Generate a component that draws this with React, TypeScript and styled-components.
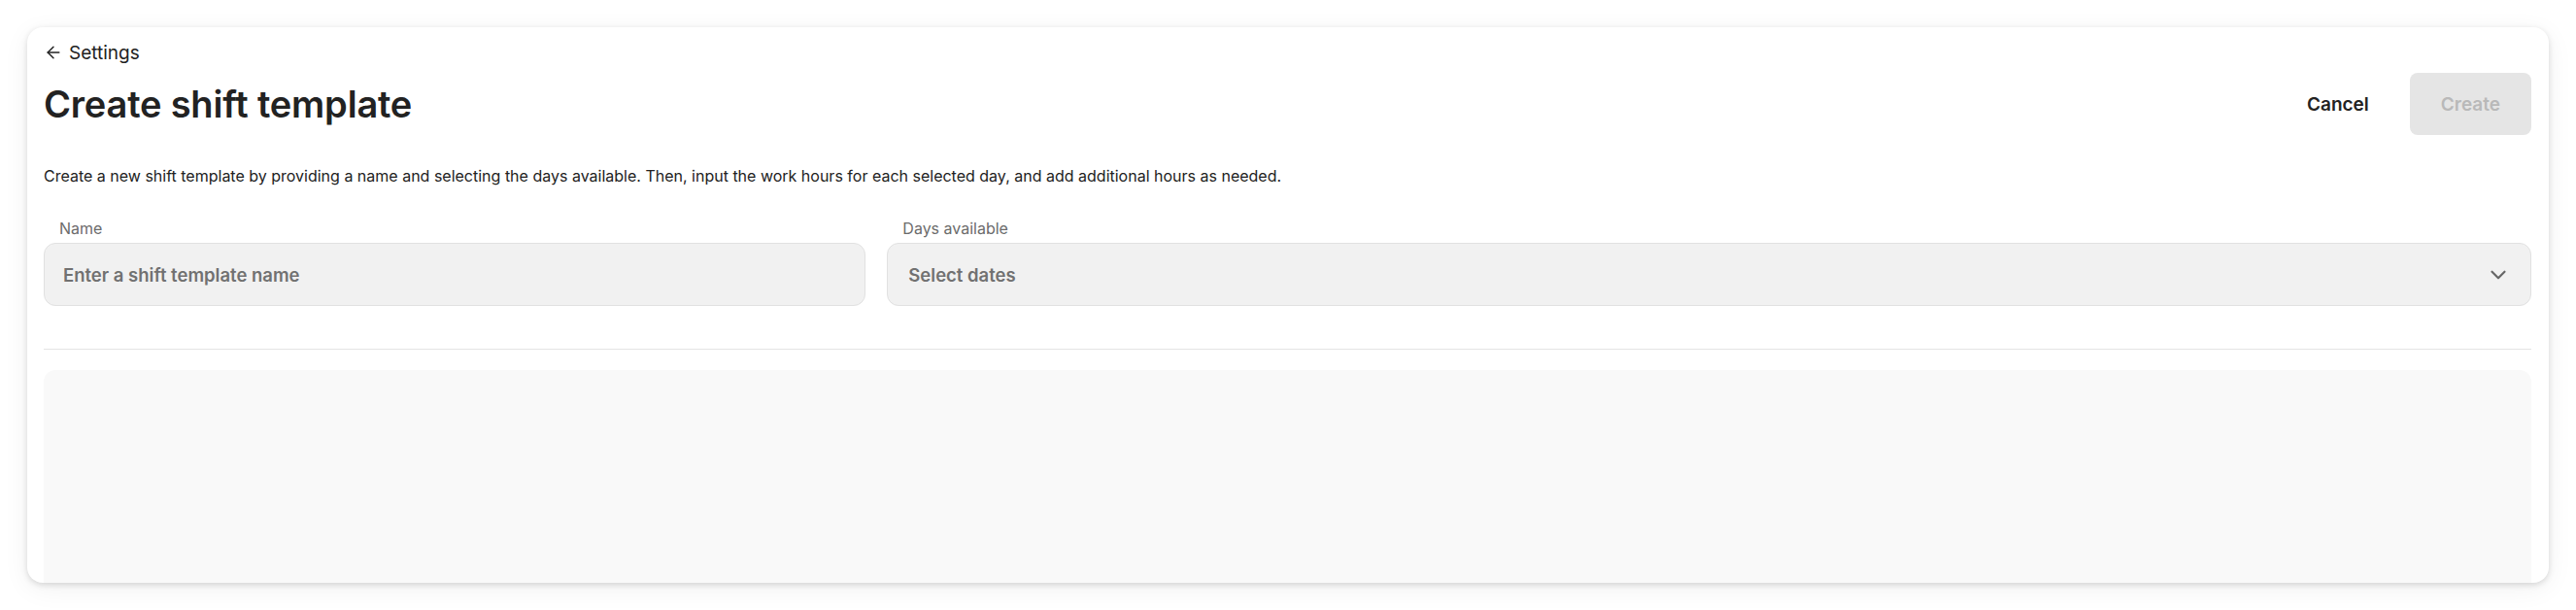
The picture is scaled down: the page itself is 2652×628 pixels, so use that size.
import { ArrowLeft, ChevronDown } from "lucide-react";
import styled, { createGlobalStyle } from "styled-components";

const GlobalStyle = createGlobalStyle`
  * {
    box-sizing: border-box;
  }
  body {
    margin: 0;
    background: #ffffff;
    font-family: Inter, "Noto Sans", sans-serif;
    color: #222222;
  }
`;

const Page = styled.div`
  height: 628px;
  padding: 28px;
`;

const Card = styled.div`
  height: 100%;
  display: flex;
  flex-direction: column;
  padding: 16px 18px 0 17px;
  background: #ffffff;
  border-radius: 16px;
  overflow: hidden;
  box-shadow: 0 2px 6px rgba(0, 0, 0, 0.14), 0 6px 28px rgba(0, 0, 0, 0.06);
`;

const BackLink = styled.a`
  display: flex;
  align-items: center;
  gap: 6px;
  height: 20px;
  font-size: 19px;
  color: #222222;
  text-decoration: none;
`;

const HeaderRow = styled.div`
  display: flex;
  align-items: center;
  justify-content: space-between;
  margin-top: 11px;
`;

const Title = styled.h1`
  margin: 0;
  font-size: 38px;
  font-weight: 600;
  letter-spacing: -0.005em;
  color: #222222;
`;

const Actions = styled.div`
  display: flex;
  align-items: center;
  gap: 10px;
`;

const Button = styled.button<{ $variant?: "ghost" | "disabled" }>`
  height: 64px;
  padding: 0 32px;
  border: none;
  border-radius: 8px;
  font-family: inherit;
  font-size: 19px;
  font-weight: 600;
  cursor: pointer;
  background: ${(p) => (p.$variant === "disabled" ? "#e5e5e5" : "transparent")};
  color: ${(p) => (p.$variant === "disabled" ? "#b9b9b9" : "#222222")};
`;

const Description = styled.p`
  margin: 32px 0 0;
  font-size: 16px;
  line-height: 21px;
  color: #222222;
`;

const Fields = styled.div`
  display: grid;
  grid-template-columns: 1fr 2fr;
  gap: 22px;
  margin-top: 33px;
`;

const Field = styled.div`
  display: flex;
  flex-direction: column;
  gap: 5px;
`;

const Label = styled.label`
  padding-left: 16px;
  font-size: 16px;
  line-height: 20px;
  color: #6b6b6b;
`;

const Input = styled.input`
  height: 65px;
  padding: 0 19px;
  border: 1px solid #e1e1e1;
  border-radius: 12px;
  background: #f1f1f1;
  font-family: inherit;
  font-size: 18.5px;
  font-weight: 600;
  color: #222222;
  outline: none;

  &::placeholder {
    color: #717171;
  }
`;

const Select = styled.div`
  height: 65px;
  display: flex;
  align-items: center;
  justify-content: space-between;
  padding: 0 20px 0 21px;
  border: 1px solid #e1e1e1;
  border-radius: 12px;
  background: #f1f1f1;
  font-size: 18.5px;
  font-weight: 600;
  color: #717171;
  cursor: pointer;
`;

const Divider = styled.hr`
  margin: 44px 0 0;
  border: none;
  border-top: 1px solid #e4e4e4;
`;

const DayPanel = styled.div`
  flex: 1;
  margin-top: 21px;
  background: #f9f9f9;
  border-radius: 12px 12px 0 0;
`;

export default function App() {
  return (
    <>
      <GlobalStyle />
      <Page>
        <Card>
          <BackLink href="#">
            <ArrowLeft size={20} strokeWidth={1.75} />
            Settings
          </BackLink>
          <HeaderRow>
            <Title>Create shift template</Title>
            <Actions>
              <Button $variant="ghost">Cancel</Button>
              <Button $variant="disabled" disabled>
                Create
              </Button>
            </Actions>
          </HeaderRow>
          <Description>
            Create a new shift template by providing a name and selecting the
            days available. Then, input the work hours for each selected day,
            and add additional hours as needed.
          </Description>
          <Fields>
            <Field>
              <Label htmlFor="template-name">Name</Label>
              <Input id="template-name" placeholder="Enter a shift template name" />
            </Field>
            <Field>
              <Label>Days available</Label>
              <Select>
                Select dates
                <ChevronDown size={26} strokeWidth={2} color="#666666" />
              </Select>
            </Field>
          </Fields>
          <Divider />
          <DayPanel />
        </Card>
      </Page>
    </>
  );
}
